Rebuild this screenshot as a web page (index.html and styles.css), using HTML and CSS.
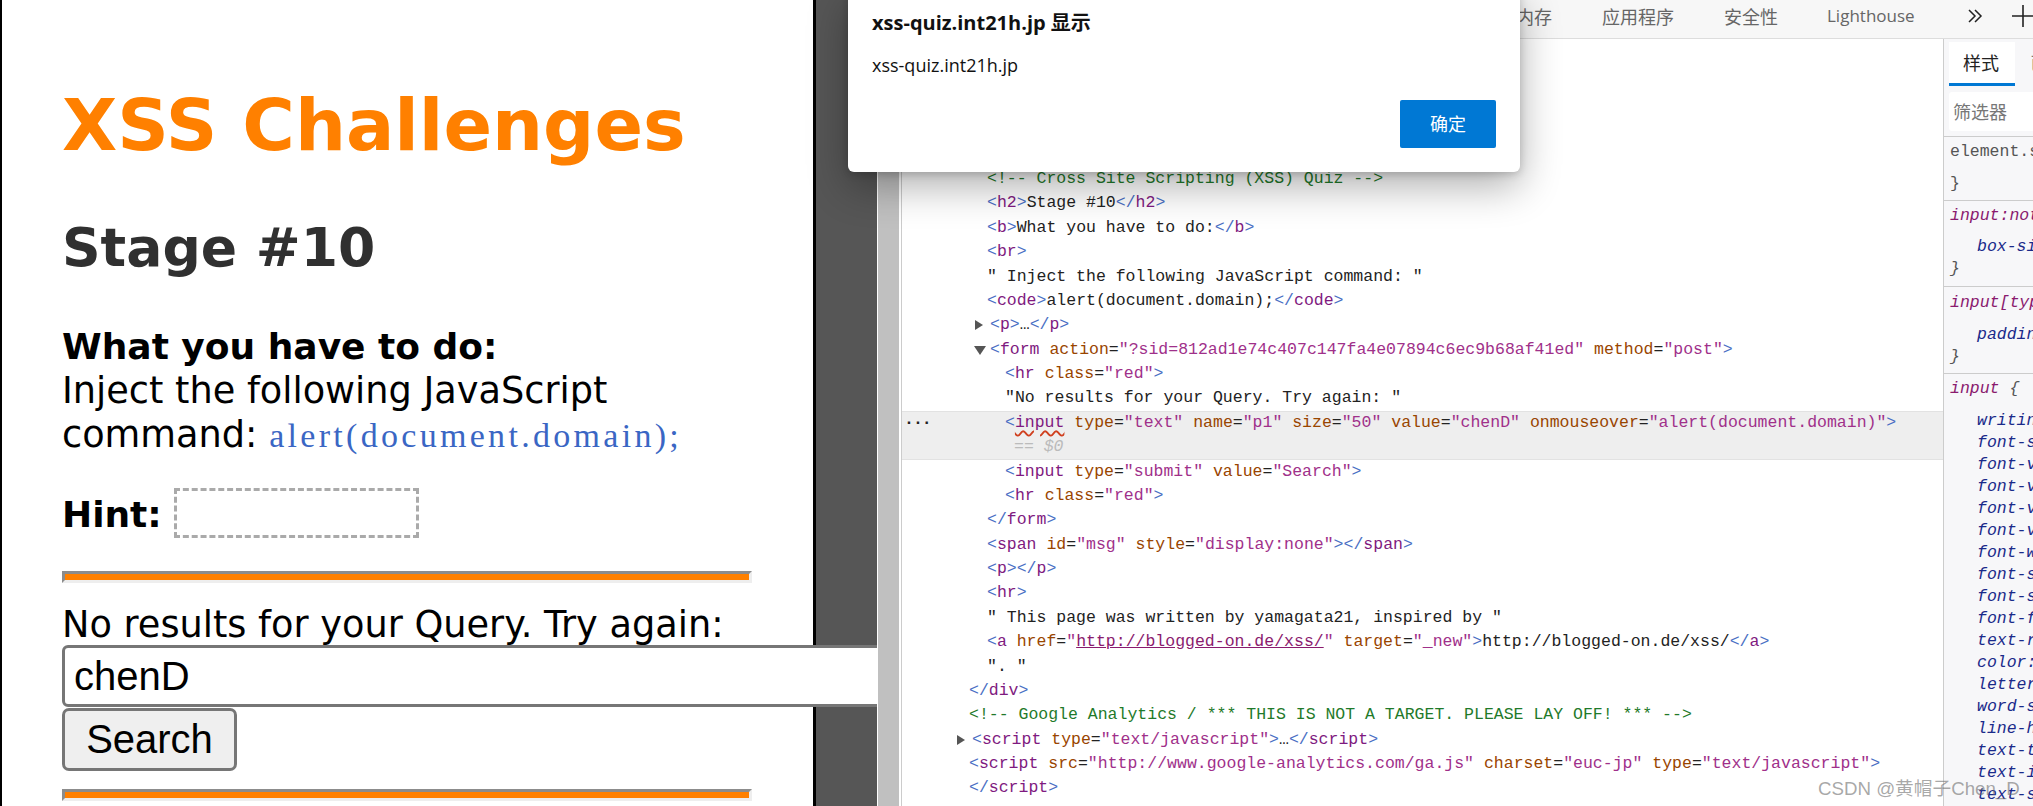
FILE: index.html
```html
<!DOCTYPE html>
<html lang="zh">
<head>
<meta charset="utf-8">
<title>XSS Challenges</title>
<link rel="stylesheet" href="styles.css">
</head>
<body>
<div class="shell">
  <section class="stage">
    <main class="page">
      <h1>XSS Challenges</h1>
      <h2>Stage #10</h2>
      <p class="task"><b>What you have to do:</b><br>Inject the following JavaScript<br>command: <code>alert(document.domain);</code></p>
      <p class="hint"><b>Hint:</b> <span class="hintbox"></span></p>
      <hr class="red">
      <form class="query">
        <div class="qtext">No results for your Query. Try again:</div>
        <input class="qinput" type="text" value="chenD">
        <input class="qbtn" type="button" value="Search">
      </form>
      <hr class="red">
    </main>
  </section>
  <div class="splitter"></div>
  <section class="devtools">
    <nav class="tabs">
      <span class="tab">内存</span>
      <span class="tab">应用程序</span>
      <span class="tab">安全性</span>
      <span class="tab">Lighthouse</span>
      <svg class="chev" viewBox="0 0 16 14" width="16" height="14"><path d="M2 1l6 6-6 6M8 1l6 6-6 6" fill="none" stroke="#222" stroke-width="1.5"/></svg>
      <svg class="plus" viewBox="0 0 22 22" width="22" height="22"><path d="M11 0v22M0 11h22" fill="none" stroke="#222" stroke-width="1.6"/></svg>
    </nav>
    <div class="panes">
      <div class="tree">
        <div class="row d1"><span class="cm">&lt;!-- Cross Site Scripting (XSS) Quiz --&gt;</span></div>
        <div class="row d1"><i>&lt;</i><em>h2</em><i>&gt;</i>Stage #10<i>&lt;/</i><em>h2</em><i>&gt;</i></div>
        <div class="row d1"><i>&lt;</i><em>b</em><i>&gt;</i>What you have to do:<i>&lt;/</i><em>b</em><i>&gt;</i></div>
        <div class="row d1"><i>&lt;</i><em>br</em><i>&gt;</i></div>
        <div class="row d1">" Inject the following JavaScript command: "</div>
        <div class="row d1"><i>&lt;</i><em>code</em><i>&gt;</i>alert(document.domain);<i>&lt;/</i><em>code</em><i>&gt;</i></div>
        <div class="row d1 arrowed"><span class="tri right"></span><i>&lt;</i><em>p</em><i>&gt;</i>…<i>&lt;/</i><em>p</em><i>&gt;</i></div>
        <div class="row d1 arrowed"><span class="tri down"></span><i>&lt;</i><em>form</em> <u>action</u>=<s>"?sid=812ad1e74c407c147fa4e07894c6ec9b68af41ed"</s> <u>method</u>=<s>"post"</s><i>&gt;</i></div>
        <div class="row d2"><i>&lt;</i><em>hr</em> <u>class</u>=<s>"red"</s><i>&gt;</i></div>
        <div class="row d2">"No results for your Query. Try again: "</div>
        <div class="selected">
          <span class="dots">···</span>
          <div class="row d2"><i>&lt;</i><em class="squiggle">input</em> <u>type</u>=<s>"text"</s> <u>name</u>=<s>"p1"</s> <u>size</u>=<s>"50"</s> <u>value</u>=<s>"chenD"</s> <u>onmouseover</u>=<s>"alert(document.domain)"</s><i>&gt;</i></div>
          <div class="row d3 dollar">== $0</div>
        </div>
        <div class="row d2"><i>&lt;</i><em>input</em> <u>type</u>=<s>"submit"</s> <u>value</u>=<s>"Search"</s><i>&gt;</i></div>
        <div class="row d2"><i>&lt;</i><em>hr</em> <u>class</u>=<s>"red"</s><i>&gt;</i></div>
        <div class="row d1"><i>&lt;/</i><em>form</em><i>&gt;</i></div>
        <div class="row d1"><i>&lt;</i><em>span</em> <u>id</u>=<s>"msg"</s> <u>style</u>=<s>"display:none"</s><i>&gt;&lt;/</i><em>span</em><i>&gt;</i></div>
        <div class="row d1"><i>&lt;</i><em>p</em><i>&gt;&lt;/</i><em>p</em><i>&gt;</i></div>
        <div class="row d1"><i>&lt;</i><em>hr</em><i>&gt;</i></div>
        <div class="row d1">" This page was written by yamagata21, inspired by "</div>
        <div class="row d1"><i>&lt;</i><em>a</em> <u>href</u>=<s>"<a class="lnk">http://blogged-on.de/xss/</a>"</s> <u>target</u>=<s>"_new"</s><i>&gt;</i>http://blogged-on.de/xss/<i>&lt;/</i><em>a</em><i>&gt;</i></div>
        <div class="row d1">". "</div>
        <div class="row d0"><i>&lt;/</i><em>div</em><i>&gt;</i></div>
        <div class="row d0"><span class="cm">&lt;!-- Google Analytics / *** THIS IS NOT A TARGET. PLEASE LAY OFF! *** --&gt;</span></div>
        <div class="row d0 arrowed"><span class="tri right"></span><i>&lt;</i><em>script</em> <u>type</u>=<s>"text/javascript"</s><i>&gt;</i>…<i>&lt;/</i><em>script</em><i>&gt;</i></div>
        <div class="row d0"><i>&lt;</i><em>script</em> <u>src</u>=<s>"http://www.google-analytics.com/ga.js"</s> <u>charset</u>=<s>"euc-jp"</s> <u>type</u>=<s>"text/javascript"</s><i>&gt;</i></div>
        <div class="row d0"><i>&lt;/</i><em>script</em><i>&gt;</i></div>
      </div>
      <aside class="styles">
        <div class="stabs"><span class="stab">样式</span><span class="stab2">已计算</span></div>
        <div class="filter"><span class="filterbox">筛选器</span></div>
        <div class="rule r1"><div class="gray">element.style {</div><div class="brace">}</div></div>
        <div class="rule r2"><div class="sel">input:not([type="file" i])</div><div class="prop">box-sizing: border-box;</div><div class="brace it">}</div></div>
        <div class="rule r3"><div class="sel">input[type="text" i] {</div><div class="prop">padding-block: 1px;</div><div class="brace it">}</div></div>
        <div class="rule r4">
          <div class="sel">input <span class="brace">{</span></div>
          <div class="prop">writing-mode: horizontal-tb !important;</div>
          <div class="prop">font-style: ;</div>
          <div class="prop">font-variant-ligatures: ;</div>
          <div class="prop">font-variant-caps: ;</div>
          <div class="prop">font-variant-numeric: ;</div>
          <div class="prop">font-variant-east-asian: ;</div>
          <div class="prop">font-weight: ;</div>
          <div class="prop">font-stretch: ;</div>
          <div class="prop">font-size: ;</div>
          <div class="prop">font-family: ;</div>
          <div class="prop">text-rendering: auto;</div>
          <div class="prop">color: fieldtext;</div>
          <div class="prop">letter-spacing: normal;</div>
          <div class="prop">word-spacing: normal;</div>
          <div class="prop">line-height: normal;</div>
          <div class="prop">text-transform: none;</div>
          <div class="prop">text-indent: 0px;</div>
          <div class="prop">text-shadow: none;</div>
        </div>
      </aside>
    </div>
  </section>
</div>
<div class="dialog">
  <div class="dtitle">xss-quiz.int21h.jp 显示</div>
  <div class="dbody">xss-quiz.int21h.jp</div>
  <div class="dactions"><button class="dok" type="button">确定</button></div>
</div>
<div class="watermark">CSDN @黄帽子Chen_D</div>
</body>
</html>
```
FILE: styles.css
```css
* { box-sizing: border-box; }
html, body { margin: 0; padding: 0; width: 2033px; height: 806px; overflow: hidden; background: #fff; }
.shell { display: flex; width: 2033px; height: 806px; position: relative; }

/* left page */
.stage { width: 877px; flex: none; background: #565656; position: relative; z-index: 1; overflow: hidden; height: 806px; }
.page { width: 816px; height: 806px; background: #fff; border-left: 2px solid #000; border-right: 3px solid #000; padding: 83px 0 0 60px; font-family: "DejaVu Sans", sans-serif; font-size: 36.7px; color: #000; }
.page h1 { margin: 0; font-size: 71.7px; line-height: 84px; color: #ff8000; font-weight: 700; }
.page h2 { margin: 50px 0 0; font-size: 53.6px; line-height: 62px; color: #303030; font-weight: 700; }
.task { margin: 46px 0 0; line-height: 44px; }
.task b, .hint b { font-size: 36px; font-weight: 700; }
.task code { font-family: "Liberation Serif", serif; font-size: 34px; letter-spacing: 3.3px; line-height: 1; color: #3a66c4; }
.hint { margin: 31px 0 0; display: flex; align-items: center; gap: 12px; line-height: 44px; }
.hint b { padding-top: 3px; }
.hintbox { display: block; width: 245px; height: 50px; border: 3px dashed #aaa; }
hr.red { margin: 33px 0 0; height: 12px; width: 690px; background: #ff8000; border-width: 3px; border-style: solid; border-color: #8c8c8c #eee #eee #8c8c8c; }
.query { margin: 0; padding-top: 18px; }
.qtext { line-height: 47px; height: 44px; white-space: nowrap; }
.qinput { display: block; width: 900px; height: 62px; margin: 0; padding: 0 9px; border: 3px solid #767676; border-radius: 6px; background: #fff; font-family: "Liberation Sans", sans-serif; font-size: 40px; color: #000; outline: none; }
.qbtn { display: block; width: 175px; height: 63px; margin: 1px 0 0; padding: 0; border: 3px solid #767676; border-radius: 7px; background: #efefef; font-family: "Liberation Sans", sans-serif; font-size: 40px; color: #000; }
.query + hr.red { margin-top: 18px; }

/* splitter */
.splitter { width: 25px; flex: none; height: 806px; background: linear-gradient(to right, #fff 0 1px, #c0c0c0 1px 22px, #fff 22px 24px, #ccc 24px 25px); }

/* devtools */
.devtools { flex: 1; min-width: 0; height: 806px; display: flex; flex-direction: column; overflow: hidden; }
.tabs { height: 39px; flex: none; display: flex; align-items: center; background: #f7f7f7; border-bottom: 1px solid #ddd; padding: 0 0 7px 614px; font-family: "Noto Sans CJK SC", sans-serif; font-size: 18px; color: #666; white-space: nowrap; }
.tab { margin-right: 50px; }
.tab:nth-child(4) { font-family: "Open Sans", sans-serif; font-size: 17px; margin-left: -1px; margin-right: 52px; }
.chev { flex: none; margin-right: 29px; }
.plus { flex: none; }
.panes { flex: 1; display: flex; min-height: 0; }

.tree { width: 1041px; flex: none; padding-top: 128px; background: #fff; font-family: "Liberation Mono", monospace; font-size: 16.5px; color: #222; }
.row { height: 24.38px; line-height: 24.38px; position: relative; white-space: pre; }
.row i, .row em, .row u, .row s { font-style: normal; text-decoration: none; }
.row i { color: #4a6fc4; }
.row em { color: #7f1a80; }
.row u { color: #994500; }
.row s { color: #a0308a; }
.cm { color: #1f7a2a; }
.lnk { color: #8a1a6e; text-decoration: underline; }
.d0 { padding-left: 67px; }
.d1 { padding-left: 85px; }
.d2 { padding-left: 103px; }
.d3 { padding-left: 112px; }
.row.arrowed { padding-left: 88px; }
.row.d0.arrowed { padding-left: 70px; }
.tri { position: absolute; display: block; width: 0; height: 0; }
.tri.right { top: 7px; margin-left: -15px; border-left: 8px solid #555; border-top: 5.5px solid transparent; border-bottom: 5.5px solid transparent; }
.tri.down { top: 8px; margin-left: -16px; border-top: 9px solid #555; border-left: 6px solid transparent; border-right: 6px solid transparent; }
.selected { background: #eee; position: relative; box-shadow: inset 0 1px 0 #e2e2e2, inset 0 -1px 0 #e2e2e2; }
.dots { position: absolute; left: 2px; top: 0; line-height: 24px; color: #222; font-weight: 700; letter-spacing: -1px; }
.row em.squiggle { text-decoration: underline wavy #d0401f; text-decoration-thickness: 1.5px; text-underline-offset: 3px; }
.row.dollar { color: #bbb; font-style: italic; }

/* styles pane */
.styles { width: 90px; flex: none; overflow: hidden; background: #f7f7f9; border-left: 1px solid #ccc; font-family: "Liberation Mono", monospace; font-size: 16.5px; line-height: 22px; white-space: nowrap; }
.stabs { height: 47px; display: flex; align-items: flex-start; padding: 3px 0 0 5px; font-family: "Noto Sans CJK SC", sans-serif; font-size: 18px; }
.stab { width: 66px; height: 44px; flex: none; background: #fff; border-bottom: 3px solid #0078d4; text-align: center; line-height: 41px; color: #222; padding-right: 2px; }
.stab2 { margin-left: 15px; line-height: 41px; color: #777; }
.filter { height: 51px; padding: 6px 0 0 5px; border-bottom: 1px solid #ccc; }
.filterbox { display: block; width: 120px; height: 39px; background: #fff; border-radius: 3px; padding-left: 4px; font-family: "Noto Sans CJK SC", sans-serif; font-size: 18px; line-height: 39px; color: #777; }
.rule { padding-left: 6px; border-bottom: 1px solid #ccc; }
.r1 { height: 64px; padding-top: 4px; }
.r2 { height: 86px; padding-top: 4px; }
.r3 { height: 87px; padding-top: 5px; }
.r4 { border-bottom: 0; padding-top: 4px; }
.gray { color: #555; }
.sel { color: #8a1a6e; font-style: italic; height: 31px; }
.r3 .sel, .r4 .sel { height: 32px; }
.prop { color: #1a2a8a; font-style: italic; padding-left: 27px; }
.brace { color: #555; }
.brace.it { font-style: italic; }
.r1 .gray { height: 32px; }

/* dialog */
.dialog { position: absolute; left: 848px; top: -10px; width: 672px; height: 182px; z-index: 5; background: #fff; border-radius: 6px; padding: 10px 24px 0; box-shadow: 0 14px 40px rgba(0,0,0,.32), 0 2px 8px rgba(0,0,0,.18); font-family: "Open Sans", "Noto Sans CJK SC", sans-serif; color: #111; }
.dtitle { margin-top: 9px; font-size: 20px; font-weight: 700; line-height: 28px; }
.dbody { margin-top: 16px; font-size: 18px; line-height: 24px; }
.dactions { display: flex; justify-content: flex-end; margin-top: 23px; }
.dok { width: 96px; height: 48px; background: #0078d4; color: #fff; border: 0; border-radius: 2px; font-family: "Noto Sans CJK SC", sans-serif; font-size: 18px; padding: 0 0 2px; }

.watermark { position: absolute; left: 1818px; top: 777px; z-index: 6; font-family: "Liberation Sans", "Noto Sans CJK SC", sans-serif; font-size: 18.7px; line-height: 24px; color: rgba(110,110,110,.6); white-space: nowrap; }
```
